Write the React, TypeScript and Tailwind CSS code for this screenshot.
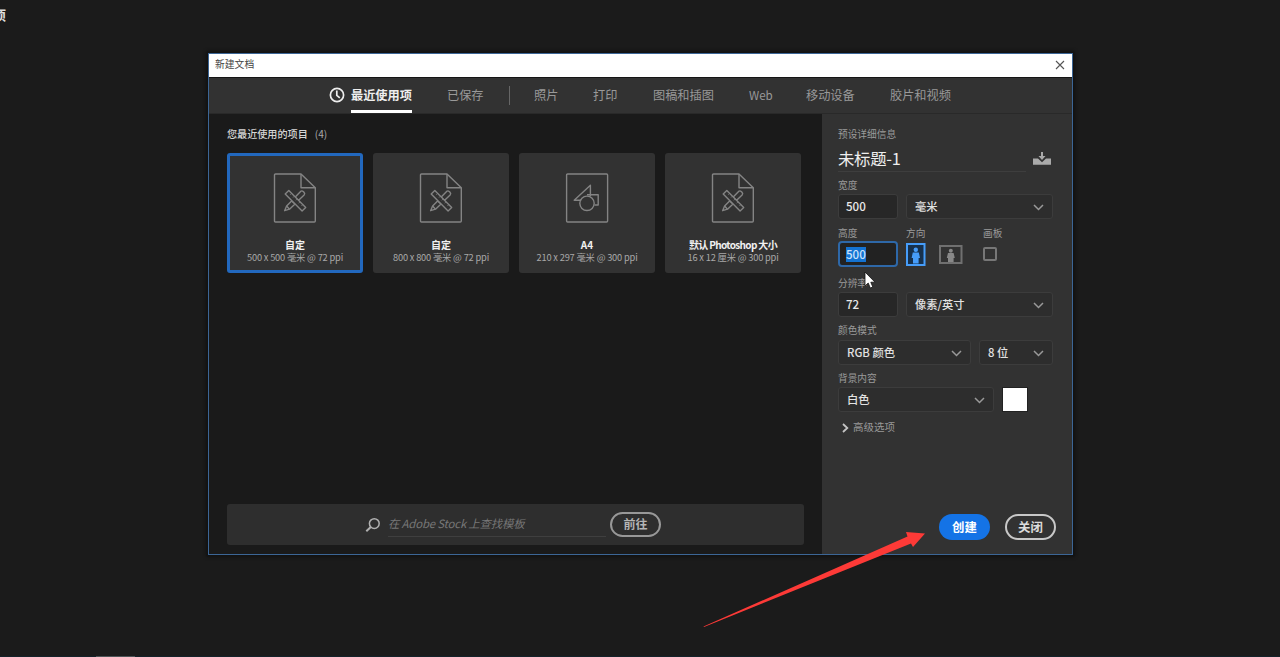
import type { ReactNode } from 'react';

const stroke = '#848484';

function CustomDocIcon() {
  return (
    <svg width="44" height="52" viewBox="0 0 44 52" fill="none" stroke={stroke} strokeWidth="1.4" strokeLinejoin="round">
      <path d="M2.5 2 H28 L42.3 15.7 V49 Q42.3 50 41.3 50 H2.5 Q1.5 50 1.5 49 V3 Q1.5 2 2.5 2 Z" />
      <path d="M28 2 V15.7 H42.3" />
      <path d="M27.6 19.4 Q28.9 18.3 30.2 19.5 L31 20.3 Q32.3 21.7 31.1 23 L25.4 28.6 L22 25.2 Z" />
      <path d="M18.6 29 L13.6 34 L11.6 38.7 L16.5 37.2 L22 32 Z" />
      <path d="M13.6 34 L16.5 37.2" />
      <path d="M15.8 18.6 L32.7 35.5 L29.1 38.9 L12.2 22 Z" fill="#323232" />
      <path d="M18.6 21.4 l-1.3 1.3 M21.4 24.2 l-1.3 1.3 M24.2 27 l-1.3 1.3 M27 29.8 l-1.3 1.3 M29.8 32.6 l-1.3 1.3" strokeWidth="0.8" />
    </svg>
  );
}

function ArtDocIcon() {
  return (
    <svg width="44" height="52" viewBox="0 0 44 52" fill="none" stroke={stroke} strokeWidth="1.4" strokeLinejoin="round">
      <rect x="1.6" y="2" width="41" height="48" rx="1" />
      <path d="M16.2 28.3 H9.2 L25.4 13.3 V24.2" />
      <path d="M22 22.8 H33.2 V33 H29.5" />
      <circle cx="22" cy="31.3" r="7.2" />
    </svg>
  );
}

function Chevron() {
  return (
    <svg className="shrink-0" width="11" height="7" viewBox="0 0 11 7" fill="none" stroke="#999" strokeWidth="1.5">
      <path d="M1 1 L5.5 5.5 L10 1" />
    </svg>
  );
}

function Label({ children, className }: { children: ReactNode; className: string }) {
  return <div className={`h-[14px] text-[9.7px] leading-[14px] text-[#9b9b9b] ${className}`}>{children}</div>;
}

function Select({ children, className }: { children: ReactNode; className: string }) {
  return (
    <div className={`flex h-[25px] items-center justify-between rounded-[3px] border border-[#3c3c3c] bg-[#2d2d2d] pt-px pr-2 pl-2 text-[11.3px] leading-none text-[#e2e2e2] ${className}`}>
      <span className="pb-px font-medium">{children}</span>
      <Chevron />
    </div>
  );
}

function Field({ children }: { children: ReactNode }) {
  return (
    <div className="flex h-[25px] w-[60px] items-center rounded-[3px] border border-[#3c3c3c] bg-[#272727] pl-[7px] text-[11.6px] leading-none font-medium text-[#e8e8e8]">
      {children}
    </div>
  );
}

const presets = [
  { name: '自定', detail: '500 x 500 毫米 @ 72 ppi', art: false, selected: true },
  { name: '自定', detail: '800 x 800 毫米 @ 72 ppi', art: false, selected: false },
  { name: 'A4', detail: '210 x 297 毫米 @ 300 ppi', art: true, selected: false },
  { name: '默认 Photoshop 大小', detail: '16 x 12 厘米 @ 300 ppi', art: false, selected: false },
];

function PresetCard({ name, detail, art, selected }: (typeof presets)[number]) {
  return (
    <div
      className={`flex h-[120px] w-[136px] flex-col items-center rounded-[3px] border-[3px] bg-[#323232] ${
        selected ? 'border-[#2268be]' : 'border-[#323232]'
      }`}
    >
      <div className="mt-[16px] h-[52px]">{art ? <ArtDocIcon /> : <CustomDocIcon />}</div>
      <div className={`mt-[14px] h-[13px] text-[10px] leading-[13px] font-bold whitespace-nowrap text-[#f0f0f0] ${name.length > 4 ? 'tracking-[-0.65px]' : ''}`}>
        {name}
      </div>
      <div className="h-[13px] text-[9.3px] leading-[13px] tracking-[-0.18px] whitespace-nowrap text-[#a8a8a8]">{detail}</div>
    </div>
  );
}

function Tabs() {
  return (
    <div className="flex h-[36px] border-b border-[#292929] bg-[#323232] pl-[120px] text-[12.2px] leading-[34px] whitespace-nowrap text-[#999]">
      <svg className="mt-[9px] mr-[6px] shrink-0" width="16" height="16" viewBox="0 0 16 16" fill="none" stroke="#eee" strokeWidth="1.7">
        <circle cx="8" cy="8" r="6.6" />
        <path d="M7.8 3.4 V8.3 L10.8 10.8" />
      </svg>
      <div className="h-[35px] w-[61px] border-b-[3px] border-white font-bold text-[#eee]">最近使用项</div>
      <div className="ml-[35px] w-[37px]">已保存</div>
      <div className="mt-[8px] ml-[25px] h-[19px] w-px bg-[#666]" />
      <div className="ml-6 w-[25px]">照片</div>
      <div className="ml-[34px] w-[25px]">打印</div>
      <div className="ml-[35px] w-[61px]">图稿和插图</div>
      <div className="ml-[35px] w-[23px] text-[11.6px]">Web</div>
      <div className="ml-[34px] w-[50px]">移动设备</div>
      <div className="ml-[34px] w-[61px]">胶片和视频</div>
    </div>
  );
}

function Recent() {
  return (
    <div className="flex w-[613px] flex-col bg-[#1a1a1a] pl-[18px]">
      <div className="mt-[13px] flex h-[14px] gap-[7px] text-[10.1px] leading-[14px] text-[#d6d6d6]">
        <span className="font-medium">您最近使用的项目</span>
        <span className="text-[#aaa]">(4)</span>
      </div>
      <div className="mt-[12px] flex gap-[10px]">
        {presets.map((p, i) => (
          <PresetCard key={i} {...p} />
        ))}
      </div>
      <div className="mt-auto mb-[9px] flex h-[41px] w-[577px] items-center rounded-[3px] bg-[#2e2e2e] pl-[138px]">
        <svg width="16" height="16" viewBox="0 0 16 16" fill="none" stroke="#b0b0b0" strokeWidth="1.5">
          <circle cx="9.3" cy="6.6" r="4.9" />
          <path d="M5.8 10.1 L1.3 14.3" strokeWidth="2" />
        </svg>
        <div className="ml-[7px] h-[25px] w-[218px] border-b border-[#3f3f3f] text-[11.4px] leading-[23px] tracking-[-0.18px] whitespace-nowrap text-[#777] italic">
          在 Adobe Stock 上查找模板
        </div>
        <div className="ml-[4px] flex h-[25px] w-[51px] items-center justify-center rounded-full border-2 border-[#989898] pb-px text-[12px] leading-none font-bold text-[#b5b5b5]">
          前往
        </div>
      </div>
    </div>
  );
}

function Portrait() {
  return (
    <svg width="20" height="23" viewBox="0 0 20 23" fill="none">
      <rect x="1" y="1" width="17.5" height="21" fill="#17314d" stroke="#469dfa" strokeWidth="2" />
      <circle cx="9.8" cy="6.8" r="2.2" fill="#469dfa" />
      <path d="M6.8 9.5 H12.8 L14 15 H12.6 V20.5 H7 V15 H5.6 Z" fill="#469dfa" />
    </svg>
  );
}

function Landscape() {
  return (
    <svg width="24" height="19" viewBox="0 0 24 19" fill="none">
      <rect x="1" y="1" width="21.5" height="17" stroke="#707070" strokeWidth="2" />
      <circle cx="11.8" cy="5.7" r="2" fill="#888" />
      <path d="M9 8 H14.6 L15.8 13 H14.6 V17 H9 V13 H7.8 Z" fill="#888" />
    </svg>
  );
}

function Details() {
  return (
    <div className="flex flex-1 flex-col bg-[#323232] pl-4">
      <Label className="mt-[13px]">预设详细信息</Label>
      <div className="mt-[6px] flex">
        <div className="h-[25px] w-[188px] border-b border-[#3e3e3e] text-[16.4px] leading-[22px] tracking-[-0.3px] whitespace-nowrap text-[#eee]">未标题-1</div>
        <svg className="mt-[5px] ml-[6px]" width="20" height="14" viewBox="0 0 20 14" fill="#aaa">
          <path d="M1 6.5 H6 L10 10.2 L14 6.5 H19 V12.8 H1 Z" />
          <path d="M9 0 H11 V4 H13.5 L10 8 L6.5 4 H9 Z" />
        </svg>
      </div>
      <Label className="mt-[6px]">宽度</Label>
      <div className="mt-[2px] flex gap-2">
        <Field>500</Field>
        <Select className="w-[147px]">毫米</Select>
      </div>
      <div className="mt-[7px] flex">
        <Label className="w-[68px]">高度</Label>
        <Label className="w-[77px]">方向</Label>
        <Label className="">画板</Label>
      </div>
      <div className="mt-px flex h-[26px] items-center">
        <div className="flex h-[26px] w-[60px] items-center rounded-[4px] border-2 border-[#2e68a8] bg-[#222] pl-[6px]">
          <span className="bg-[#1473d2] text-[11.6px] leading-[15px] font-medium text-[#c9e2fb]">500</span>
        </div>
        <div className="ml-2"><Portrait /></div>
        <div className="ml-[13px]"><Landscape /></div>
        <div className="mb-px ml-[20px] h-[14px] w-[14px] rounded-[2px] border-2 border-[#777]" />
      </div>
      <Label className="mt-[9px]">分辨率</Label>
      <div className="mt-[2px] flex gap-2">
        <Field>72</Field>
        <Select className="w-[147px]">像素/英寸</Select>
      </div>
      <Label className="mt-[6px]">颜色模式</Label>
      <div className="mt-[3px] flex gap-2">
        <Select className="w-[133px]">RGB 颜色</Select>
        <Select className="w-[74px]">8 位</Select>
      </div>
      <Label className="mt-[6px]">背景内容</Label>
      <div className="mt-[2px] flex items-center gap-[9px]">
        <Select className="w-[156px]">白色</Select>
        <div className="h-[23px] w-[24px] bg-white outline outline-[#222]" />
      </div>
      <div className="mt-[8px] flex h-[14px] items-center pl-1 text-[10.5px] leading-[14px] text-[#999]">
        <svg className="mt-px mr-1" width="7" height="10" viewBox="0 0 7 10" fill="none" stroke="#c4c4c4" strokeWidth="1.8">
          <path d="M1 1 L5.3 5 L1 9" />
        </svg>
        高级选项
      </div>
      <div className="mt-auto mr-[16px] mb-[14px] flex justify-end gap-[15px] text-[12.4px] leading-none font-bold">
        <div className="flex h-[26px] w-[51px] items-center justify-center rounded-full bg-[#1473e6] text-white">创建</div>
        <div className="flex h-[26px] w-[51px] items-center justify-center rounded-full border-2 border-[#c8c8c8] text-[#dcdcdc]">关闭</div>
      </div>
    </div>
  );
}

export default function App() {
  return (
    <div className="relative h-[657px] w-[1280px] overflow-hidden bg-[#1b1b1b] pt-[53px] pl-[208px] font-['Noto_Sans_CJK_SC',sans-serif]">
      <div className="absolute top-[7px] left-[-7px] text-[13px] leading-[15px] font-bold text-[#ddd]">项</div>

      <div className="flex h-[502px] w-[865px] flex-col border border-[#3c6696] shadow-[0_0_3px_2px_#111]">
        <div className="flex h-[23px] items-center justify-between bg-white pr-[7px] pb-px pl-[6px] text-[9.8px] leading-none text-[#444]">
          <span>新建文档</span>
          <svg width="10" height="10" viewBox="0 0 10 10" fill="none" stroke="#555" strokeWidth="1.1">
            <path d="M1 1 L9 9 M9 1 L1 9" />
          </svg>
        </div>
        <div className="h-px bg-[#151515]" />
        <Tabs />
        <div className="flex flex-1">
          <Recent />
          <Details />
        </div>
      </div>

      <svg className="absolute top-[271px] left-[864px]" width="14" height="20" viewBox="0 0 14 20">
        <path d="M1 1 V15 L4.2 12 L6.3 17 L8.8 16 L6.8 11.2 H11 Z" fill="#fff" stroke="#111" strokeWidth="0.8" />
      </svg>
      <svg className="absolute top-[525px] left-[700px]" width="230" height="106" viewBox="0 0 230 106">
        <path d="M3.5 101.5 L207.5 11.5 L206 7 L225 8.5 L213 22 L211 18.5 L4 102 Z" fill="#fd3a37" />
      </svg>
      <div className="absolute bottom-0 left-0 flex h-px w-full bg-[#14222a]">
        <div className="ml-24 w-[39px] bg-[#4d5558]" />
      </div>
    </div>
  );
}
